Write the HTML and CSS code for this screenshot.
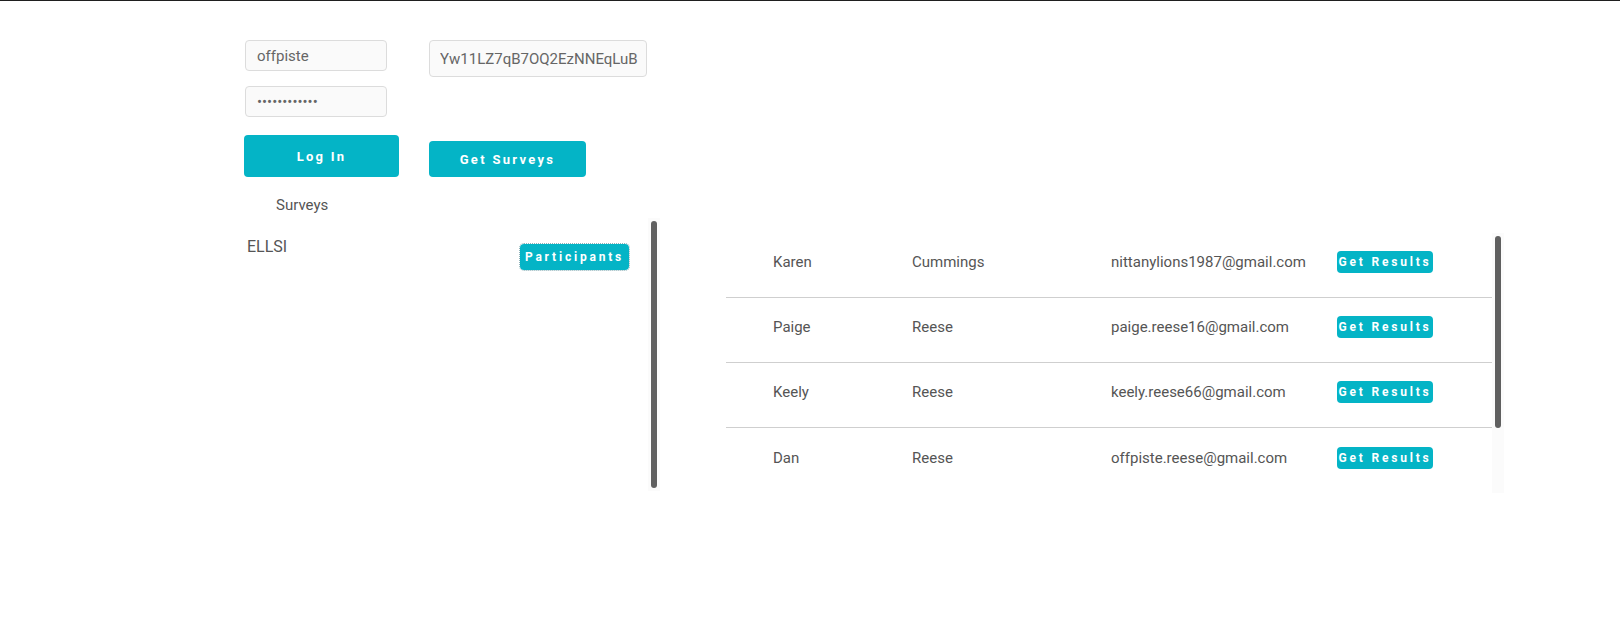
FILE: index.html
```html
<!DOCTYPE html>
<html lang="en">
<head>
    <meta charset="UTF-8">
    <meta name="viewport" content="width=device-width, initial-scale=1.0">
    <title>Survey Results</title>
    <link rel="stylesheet" href="styles.css">
</head>
<body>
    <div class="app">
        <!-- Login and token -->
        <div class="auth">
            <div class="auth-col login-col">
                <input class="field" type="text" value="offpiste">
                <input class="field" type="password" value="passwordpass">
                <button class="btn btn-login">Log In</button>
            </div>
            <div class="auth-col token-col">
                <input class="field field-token" type="text" value="Yw11LZ7qB7OQ2EzNNEqLuB">
                <button class="btn btn-surveys">Get Surveys</button>
            </div>
        </div>

        <div class="surveys-label">Surveys</div>

        <div class="panels">
            <!-- Daftar survey -->
            <div class="panel survey-panel">
                <div class="panel-body">
                    <div class="survey-row">
                        <span class="survey-name">ELLSI</span>
                        <button class="btn btn-small btn-participants">Participants</button>
                    </div>
                </div>
                <div class="scrollbar"><div class="thumb thumb-full"></div></div>
            </div>

            <!-- Daftar peserta -->
            <div class="panel participant-panel">
                <div class="panel-body">
                    <div class="participant-row">
                        <span>Karen</span>
                        <span>Cummings</span>
                        <span>nittanylions1987@gmail.com</span>
                        <button class="btn btn-small btn-results">Get Results</button>
                    </div>
                    <div class="participant-row">
                        <span>Paige</span>
                        <span>Reese</span>
                        <span>paige.reese16@gmail.com</span>
                        <button class="btn btn-small btn-results">Get Results</button>
                    </div>
                    <div class="participant-row">
                        <span>Keely</span>
                        <span>Reese</span>
                        <span>keely.reese66@gmail.com</span>
                        <button class="btn btn-small btn-results">Get Results</button>
                    </div>
                    <div class="participant-row">
                        <span>Dan</span>
                        <span>Reese</span>
                        <span>offpiste.reese@gmail.com</span>
                        <button class="btn btn-small btn-results">Get Results</button>
                    </div>
                </div>
                <div class="scrollbar"><div class="thumb thumb-part"></div></div>
            </div>
        </div>
    </div>
</body>
</html>
```

FILE: styles.css
```css
body {
    margin: 0;
    border-top: 1px solid #1f1f1f;
    font-family: Roboto, "Liberation Sans", sans-serif;
    color: #555;
    background-color: #fff;
}

.app {
    padding: 39px 0 0 244px;
}

/* Login dan token */
.auth {
    display: flex;
    gap: 30px;
}

.auth-col {
    display: flex;
    flex-direction: column;
    align-items: flex-start;
}

.login-col {
    width: 155px;
}

.login-col .field + .field {
    margin-top: 15px;
}

.token-col {
    justify-content: space-between;
}

.field {
    box-sizing: border-box;
    width: 142px;
    height: 31px;
    margin-left: 1px;
    padding: 0 11px;
    border: 1px solid #dcdcdc;
    border-radius: 4px;
    background-color: #fafafa;
    font-family: Roboto, "Liberation Sans", sans-serif;
    font-size: 15px;
    color: #666;
}

.field-token {
    width: 218px;
    height: 37px;
    margin-left: 0;
    padding: 0 3px 0 10px;
}

.btn {
    border: none;
    border-radius: 4px;
    background-color: #04b4c6;
    color: white;
    font-family: Roboto, "Liberation Sans", sans-serif;
    font-weight: bold;
    cursor: pointer;
    padding: 0;
}

.btn-login {
    width: 155px;
    height: 42px;
    margin-top: 18px;
    font-size: 13px;
    letter-spacing: 2.2px;
}

.btn-surveys {
    width: 157px;
    height: 36px;
    font-size: 13px;
    letter-spacing: 2.3px;
}

.btn-small {
    font-size: 12px;
    letter-spacing: 2.8px;
}

.surveys-label {
    margin: 19px 0 0 32px;
    font-size: 15px;
    line-height: 18px;
}

/* Panel kiri dan kanan */
.panels {
    display: flex;
    align-items: flex-start;
    gap: 66px;
    margin-top: 4px;
}

.panel {
    display: flex;
}

.panel-body {
    flex: 1;
    overflow: hidden;
}

/* Scrollbar tipis di sisi kanan panel */
.scrollbar {
    width: 12px;
    padding: 3px;
    box-sizing: border-box;
    background-color: #fbfbfb;
}

.thumb {
    width: 6px;
    border-radius: 3px;
    background-color: #606060;
}

.thumb-full {
    height: 100%;
}

.thumb-part {
    height: 192px;
}

.survey-panel {
    width: 416px;
    height: 273px;
}

.survey-row {
    display: flex;
    justify-content: space-between;
    align-items: flex-start;
    padding: 19px 19px 0 3px;
}

.survey-name {
    font-size: 16px;
}

.btn-participants {
    width: 109px;
    height: 26px;
    margin-top: 7px;
    outline: 1px dotted #8fb3ba;
}

.participant-panel {
    width: 778px;
    height: 260px;
    margin-top: 15px;
}

.participant-row {
    box-sizing: border-box;
    display: grid;
    grid-template-columns: 139px 199px 226px 96px;
    align-items: center;
    height: 65px;
    padding: 0 0 6px 47px;
    border-bottom: 1px solid #cfcfcf;
    font-size: 15px;
}

.participant-row:last-child {
    border-bottom: none;
}

.btn-results {
    width: 96px;
    height: 22px;
}
```
